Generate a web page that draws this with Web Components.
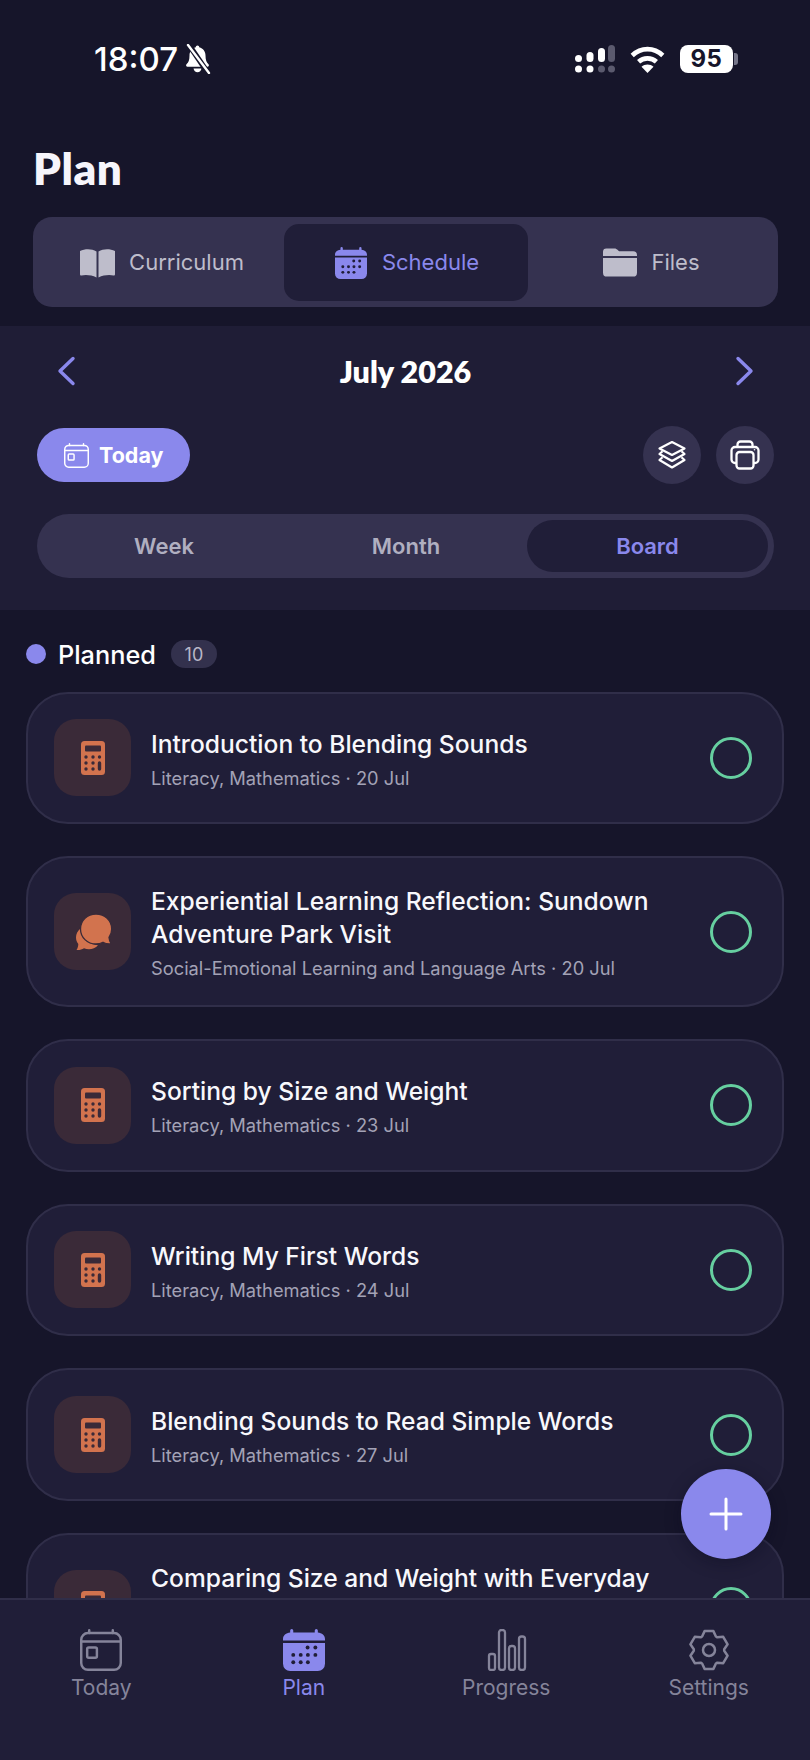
<!DOCTYPE html>
<html lang="en">
<head>
<meta charset="utf-8">
<title>Plan</title>
<style>
  html, body { margin: 0; background: #16152a; }
  body { font-family: Inter, "Liberation Sans", sans-serif; color: #fff; }
</style>
</head>
<body>
<plan-app>
  <status-bar slot="status"></status-bar>
  <plan-tabs slot="head"></plan-tabs>
  <calendar-panel slot="head"></calendar-panel>
  <column-head slot="body" count="10">Planned</column-head>
  <plan-card slot="body" icon="calc" title="Introduction to Blending Sounds">Literacy, Mathematics · 20 Jul</plan-card>
  <plan-card slot="body" icon="chat" title="Experiential Learning Reflection: Sundown Adventure Park Visit">Social-Emotional Learning and Language Arts · 20 Jul</plan-card>
  <plan-card slot="body" icon="calc" title="Sorting by Size and Weight">Literacy, Mathematics · 23 Jul</plan-card>
  <plan-card slot="body" icon="calc" title="Writing My First Words">Literacy, Mathematics · 24 Jul</plan-card>
  <plan-card slot="body" icon="calc" title="Blending Sounds to Read Simple Words">Literacy, Mathematics · 27 Jul</plan-card>
  <plan-card slot="body" icon="calc" cut title="Comparing Size and Weight with Everyday"></plan-card>
  <add-button slot="over"></add-button>
  <bottom-nav slot="nav"></bottom-nav>
</plan-app>

<script>
// icons shared by the components
const calendarFilled = (c, bg) => `
  <svg viewBox="0 0 41 41" width="100%" height="100%">
    <path fill="${c}" d="M7 1.500a1.500 1.500 0 0 1 3 0V3.500h21V1.500a1.500 1.500 0 0 1 3 0V3.500C38 3.800 41 6.300 41 10v1.200H0V10C0 6.300 3 3.800 7 3.500z"/>
    <path fill="${c}" d="M0 13.600h41V34a7 7 0 0 1-7 7H7a7 7 0 0 1-7-7z"/>
    <g fill="${bg}">
      <circle cx="24" cy="18" r="1.900"/><circle cx="31.600" cy="18" r="1.900"/>
      <circle cx="10" cy="25.300" r="1.900"/><circle cx="17.300" cy="25.300" r="1.900"/><circle cx="24.300" cy="25.300" r="1.900"/><circle cx="31.600" cy="25.300" r="1.900"/>
      <circle cx="10" cy="32.500" r="1.900"/><circle cx="17.300" cy="32.500" r="1.900"/><circle cx="24.300" cy="32.500" r="1.900"/>
    </g>
  </svg>`;

const calendarOutline = (c, sw) => `
  <svg viewBox="0 0 41 41" width="100%" height="100%" fill="none" stroke="${c}" stroke-width="${sw}" stroke-linejoin="round" stroke-linecap="round">
    <rect x="1.200" y="4" width="38.600" height="35.800" rx="6.500"/>
    <path d="M1.200 12.200h38.600M9 1.200V4M32 1.200V4"/>
    <rect x="7" y="18" width="9.500" height="10" rx="1.500"/>
  </svg>`;

function gearPoints() {
  const pts = [];
  for (let i = 0; i < 6; i++) {
    const a = (i * 60 - 90) * Math.PI / 180;
    [[-27, 15.2], [-13, 19.4], [13, 19.4], [27, 15.2]].forEach(([d, r]) => {
      const t = a + d * Math.PI / 180;
      pts.push((21 + r * Math.cos(t)).toFixed(1) + ',' + (21 + r * Math.sin(t)).toFixed(1));
    });
  }
  return pts.join(' ');
}

class PlanApp extends HTMLElement {
  connectedCallback() {
    this.attachShadow({ mode: 'open' });
    this.shadowRoot.innerHTML = `
      <style>
        :host { display: flex; flex-direction: column; width: 810px; height: 1760px; background: #16152a; overflow: hidden; position: relative; }
        .list { flex: 1; min-height: 0; overflow: hidden; padding: 0 26px; display: flex; flex-direction: column; gap: 32px; position: relative; }
        ::slotted(bottom-nav) { flex: none; }
      </style>
      <slot name="status"></slot>
      <slot name="head"></slot>
      <div class="list"><slot name="body"></slot></div>
      <slot name="over"></slot>
      <slot name="nav"></slot>
    `;
  }
}

class StatusBar extends HTMLElement {
  connectedCallback() {
    this.attachShadow({ mode: 'open' });
    this.shadowRoot.innerHTML = `
      <style>
        :host { display: flex; align-items: center; height: 118px; padding: 0 72px 0 94px; font-family: Inter, sans-serif; }
        .time { font-size: 33px; font-weight: 500; letter-spacing: 0; color: #fff; }
        .bell { margin-left: 6px; display: block; }
        .right { margin-left: auto; display: flex; align-items: center; gap: 15px; }
        .batt { display: flex; align-items: center; gap: 1px; }
        .cell { width: 53px; height: 28px; background: #fff; border-radius: 8px; color: #16152a; font-size: 24px; font-weight: 700; letter-spacing: 0.6px; text-align: center; line-height: 28px; }
        .tip { width: 4px; height: 12px; background: #77778a; border-radius: 0 3px 3px 0; }
      </style>
      <span class="time">18:07</span>
      <svg class="bell" width="28" height="30" viewBox="0 0 28 30">
        <path fill="#fff" d="M13.500 1.500c-1 0-1.700.8-1.700 1.800C7.800 4.300 5.500 7.600 5.500 11.500c0 4.600-1 7-3 8.800-.9.900-.3 2.400 1 2.400h20c1.300 0 1.900-1.500 1-2.400-2-1.800-3-4.200-3-8.800 0-3.900-2.300-7.200-6.300-8.200 0-1-.7-1.800-1.700-1.800z"/>
        <path fill="#fff" d="M9.500 24.500h8c-.3 2.200-2 3.700-4 3.700s-3.700-1.500-4-3.700z"/>
        <path d="M5 1l19 28" stroke="#16152a" stroke-width="5.500"/>
        <path d="M4 1l21 28" stroke="#fff" stroke-width="2.400" stroke-linecap="round"/>
      </svg>
      <div class="right">
        <svg width="40" height="29" viewBox="0 0 40 29">
          <g fill="#fff">
            <rect x="0" y="10" width="7" height="7" rx="3.500"/><rect x="11.500" y="7" width="7" height="10" rx="3.500"/><rect x="23" y="3" width="7" height="14" rx="3.500"/>
            <circle cx="3.500" cy="24" r="3.500"/><circle cx="15" cy="24" r="3.500"/>
          </g>
          <g fill="#5b5a6e">
            <rect x="33" y="0" width="7" height="17" rx="3.500"/>
            <circle cx="26.500" cy="24" r="3.500"/><circle cx="36.500" cy="24" r="3.500"/>
          </g>
        </svg>
        <svg width="35" height="27" viewBox="0 0 35 27" fill="none" stroke="#fff" stroke-width="4.600">
          <path d="M2.200 9.500C11 1 24 1 32.800 9.500"/>
          <path d="M8.600 15.800c5-4.600 12.800-4.600 17.800 0"/>
          <path stroke="none" fill="#fff" d="M17.500 27l-6-6.200c3.400-3 8.600-3 12 0z"/>
        </svg>
        <div class="batt"><div class="cell">95</div><div class="tip"></div></div>
      </div>
    `;
  }
}

class PlanTabs extends HTMLElement {
  connectedCallback() {
    this.attachShadow({ mode: 'open' });
    this.shadowRoot.innerHTML = `
      <style>
        :host { display: block; font-family: Inter, sans-serif; }
        h1 { margin: 0; padding: 25px 33px 0; font: 800 44px/50px Lato, sans-serif; letter-spacing: 0.5px; color: #f6f5fb; height: 99px; box-sizing: border-box; }
        .bar { margin: 0 32px 19px 33px; height: 90px; box-sizing: border-box; padding: 7px 7px 6px; background: #353250; border-radius: 19px; display: grid; grid-template-columns: 244px 244px 1fr; }
        .tab { display: flex; align-items: center; justify-content: center; gap: 14px; font-size: 22px; color: #bebdcb; border-radius: 15px; }
        .tab span:last-child { margin-bottom: 2px; }
        .tab.on { background: #201e38; color: #8a88ec; gap: 15px; padding-left: 2px; }
        .tab.last { padding-left: 4px; }
        .ic { display: block; }
      </style>
      <h1>Plan</h1>
      <div class="bar">
        <div class="tab">
          <svg class="ic" width="35" height="30" viewBox="0 0 35 30" fill="#bebdcb">
            <path d="M0 3C5 .8 11.500.5 16.500 3.500v26C11.500 26.800 5 26.600 1.500 27.500 .6 27.700 0 27.100 0 26.300z"/>
            <path d="M35 3C30 .8 23.500.5 18.500 3.500v26C23.500 26.800 30 26.600 33.500 27.500c.9.200 1.500-.4 1.500-1.200z"/>
          </svg>
          <span>Curriculum</span>
        </div>
        <div class="tab on">
          <span style="width:32px;height:32px;display:block">${calendarFilled('#8a88ec', '#201e38')}</span>
          <span>Schedule</span>
        </div>
        <div class="tab last">
          <svg class="ic" width="34" height="29" viewBox="0 0 35 29" fill="#bebdcb">
            <path d="M0 3.500A3.500 3.500 0 0 1 3.500 0h8.300c1.200 0 2 .4 2.800 1.200L16.500 3H31a4 4 0 0 1 4 4v.8H0z"/>
            <path d="M0 9.800h35V25a4 4 0 0 1-4 4H4a4 4 0 0 1-4-4z"/>
          </svg>
          <span>Files</span>
        </div>
      </div>
    `;
  }
}

class CalendarPanel extends HTMLElement {
  connectedCallback() {
    this.attachShadow({ mode: 'open' });
    this.shadowRoot.innerHTML = `
      <style>
        :host { display: block; height: 284px; box-sizing: border-box; padding: 17px 36px 0 37px; background: #1f1d36; font-family: Inter, sans-serif; }
        .month { display: flex; align-items: center; justify-content: space-between; height: 56px; padding: 0 20px; }
        .month b { font: 800 30.500px/40px Lato, sans-serif; color: #fff; }
        .tools { display: flex; align-items: center; margin-top: 27px; height: 58px; gap: 15px; }
        .today { display: flex; align-items: center; gap: 10px; width: 153px; height: 54px; box-sizing: border-box; padding-left: 27px; background: #8a88ec; border-radius: 27px; font-size: 21.500px; font-weight: 700; color: #fff; margin-right: auto; }
        .round { width: 58px; height: 58px; border-radius: 50%; background: #353250; display: flex; align-items: center; justify-content: center; }
        .views { margin-top: 30px; height: 64px; box-sizing: border-box; padding: 6px; border-radius: 32px; background: #353250; display: grid; grid-template-columns: 1fr 1fr 241px; font-size: 22px; font-weight: 600; color: #b0afc0; }
        .views span { display: flex; align-items: center; justify-content: center; border-radius: 26px; }
        .views .on { background: #201e38; color: #8a88ec; }
      </style>
      <div class="month">
        <svg width="19" height="30" viewBox="0 0 19 30" fill="none" stroke="#8a88ec" stroke-width="3.400" stroke-linecap="round" stroke-linejoin="round"><path d="M16 2.500 3 15l13 12.500"/></svg>
        <b>July 2026</b>
        <svg width="19" height="30" viewBox="0 0 19 30" fill="none" stroke="#8a88ec" stroke-width="3.400" stroke-linecap="round" stroke-linejoin="round"><path d="M3 2.500 16 15 3 27.500"/></svg>
      </div>
      <div class="tools">
        <div class="today">
          <span style="width:25px;height:25px;display:block">${calendarOutline('#fff', 2.4)}</span>
          <span>Today</span>
        </div>
        <div class="round">
          <svg width="30" height="30" viewBox="0 0 30 30" fill="none" stroke="#fff" stroke-width="2.200" stroke-linejoin="round">
            <path d="M15 2 27.500 8.500 15 15 2.500 8.500z"/>
            <path d="M5.500 11.200 2.500 14 15 21l12.500-7-3-2.800"/>
            <path d="M5.500 17.200 2.500 20 15 27.500 27.500 20l-3-2.800"/>
          </svg>
        </div>
        <div class="round">
          <svg width="30" height="30" viewBox="0 0 30 30" fill="none" stroke="#fff" stroke-width="2.300" stroke-linejoin="round">
            <path d="M7.500 7V4.500A3 3 0 0 1 10.500 1.500h9a3 3 0 0 1 3 3V7"/>
            <path d="M6.500 23H5a3.500 3.500 0 0 1-3.500-3.500V10.500A3.500 3.500 0 0 1 5 7h20a3.500 3.500 0 0 1 3.500 3.500v9A3.500 3.500 0 0 1 25 23h-1.500"/>
            <rect x="6.500" y="12" width="17" height="16.500" rx="3"/>
            <circle cx="24.500" cy="9.800" r="0.800" fill="#fff" stroke="none"/>
          </svg>
        </div>
      </div>
      <div class="views"><span>Week</span><span>Month</span><span class="on">Board</span></div>
    `;
  }
}

class ColumnHead extends HTMLElement {
  connectedCallback() {
    this.attachShadow({ mode: 'open' });
    this.shadowRoot.innerHTML = `
      <style>
        :host { display: flex; align-items: center; height: 28px; margin: 30px 0 -8.500px; font-family: Inter, sans-serif; }
        .dot { width: 20px; height: 20px; border-radius: 50%; background: #8a88ec; margin-right: 12px; }
        .name { font-size: 25.300px; font-weight: 500; color: #fff; }
        .count { margin-left: 15px; width: 46px; height: 28px; border-radius: 14px; background: #33314d; color: #b8b7c8; font-size: 18px; display: flex; align-items: center; justify-content: center; }
      </style>
      <span class="dot"></span>
      <span class="name"><slot></slot></span>
      <span class="count">${this.getAttribute('count')}</span>
    `;
  }
}

const cardIcons = {
  calc: `
    <svg width="24" height="34" viewBox="0 0 24 34">
      <rect width="24" height="34" rx="3.500" fill="#d2734e"/>
      <rect x="4" y="4.500" width="16" height="6" rx="1" fill="#3a2a38"/>
      <g fill="#3a2a38">
        <circle cx="5" cy="16" r="1.700"/><circle cx="12" cy="16" r="1.700"/><circle cx="18.500" cy="16" r="1.700"/>
        <circle cx="5" cy="22" r="1.700"/><circle cx="12" cy="22" r="1.700"/>
        <circle cx="5" cy="28" r="1.700"/><circle cx="12" cy="28" r="1.700"/>
        <rect x="16.800" y="20.300" width="3.400" height="9.500" rx="1.700"/>
      </g>
    </svg>`,
  chat: `
    <svg width="36" height="38" viewBox="0 0 36 38" style="margin-left:2px">
      <path fill="#d2734e" d="M5 15C1.500 18 0 21 0 24.500c0 2.500.8 4.800 2.300 6.500-.1 2.300-.7 4.500-1.800 6 2.800.3 5.400-.5 7.500-1.800 4.800 2 10.500 1 14-3C14 32 5 26 5 15z"/>
      <path fill="#d2734e" stroke="#3a2a38" stroke-width="1.300" d="M20 1C11.200 1 4.500 7.700 4.500 16S11.200 31 20 31c2.800 0 5-.6 7-1.700 2.200 1.300 5.300 1.900 8.200 1.500-1.400-1.800-2-3.900-2.200-6.300 1.800-2.500 2.700-5.300 2.700-8.500C35.700 7.700 28.800 1 20 1z"/>
    </svg>`
};

class PlanCard extends HTMLElement {
  connectedCallback() {
    const icon = this.getAttribute('icon');
    const title = this.getAttribute('title');
    this.removeAttribute('title');
    const cut = this.hasAttribute('cut');
    this.attachShadow({ mode: 'open' });
    this.shadowRoot.innerHTML = `
      <style>
        :host { display: flex; flex: none; align-items: center; min-height: 132.600px; box-sizing: border-box; padding: 0 30px 0 26px; background: #201e38; border: 2px solid #302e49; border-radius: 42px; font-family: Inter, sans-serif; }
        :host([cut]) { min-height: 151px; }
        .tile { flex: none; width: 77px; height: 77px; border-radius: 22px; background: #3a2a38; display: flex; align-items: center; justify-content: center; }
        .text { flex: 1; margin: 27px 0 25px 20px; min-width: 0; }
        :host([cut]) .text { align-self: flex-start; margin-top: 27px; }
        .title { font-size: 24.600px; line-height: 33px; font-weight: 500; color: #f8f8fc; }
        .sub { font-size: 18.300px; line-height: 24px; margin-top: 5px; color: #a3a2b6; }
        .check { flex: none; width: 42px; height: 42px; box-sizing: border-box; border: 3.500px solid #66cfa0; border-radius: 50%; margin-left: 20px; }
      </style>
      <div class="tile">${cardIcons[icon]}</div>
      <div class="text">
        <div class="title">${title}</div>
        ${cut ? '' : '<div class="sub"><slot></slot></div>'}
      </div>
      <div class="check"></div>
    `;
  }
}

class AddButton extends HTMLElement {
  connectedCallback() {
    this.attachShadow({ mode: 'open' });
    this.shadowRoot.innerHTML = `
      <style>
        :host { position: absolute; left: 681px; top: 1469px; width: 90px; height: 90px; border-radius: 50%; background: #8a88ec; display: flex; align-items: center; justify-content: center; box-shadow: 0 4px 16px rgba(10, 8, 30, .35); }
      </style>
      <svg width="34" height="34" viewBox="0 0 34 34" stroke="#fff" stroke-width="3" stroke-linecap="round"><path d="M17 2v30M2 17h30"/></svg>
    `;
  }
}

class BottomNav extends HTMLElement {
  connectedCallback() {
    const grey = '#85849a';
    this.attachShadow({ mode: 'open' });
    this.shadowRoot.innerHTML = `
      <style>
        :host { display: grid; grid-template-columns: repeat(4, 1fr); height: 162px; box-sizing: border-box; padding-top: 29px; background: #201e38; border-top: 2px solid #302e49; font-family: Inter, sans-serif; position: relative; }
        .item { display: flex; flex-direction: column; align-items: center; font-size: 21px; line-height: 28px; color: ${grey}; }
        .item.on { color: #8a88ec; }
        .ic { width: 42px; height: 42px; display: block; margin-bottom: 3px; }
      </style>
      <div class="item"><span class="ic">${calendarOutline(grey, 2.4)}</span>Today</div>
      <div class="item on"><span class="ic">${calendarFilled('#8a88ec', '#201e38')}</span>Plan</div>
      <div class="item">
        <svg class="ic" viewBox="0 0 42 42" fill="none" stroke="${grey}" stroke-width="2.300">
          <rect x="4" y="25" width="6" height="16" rx="2"/>
          <rect x="14" y="1" width="6" height="40" rx="2.500"/>
          <rect x="24" y="17" width="6" height="24" rx="2.500"/>
          <rect x="34" y="7.500" width="6" height="33.500" rx="2.500"/>
        </svg>
        Progress
      </div>
      <div class="item">
        <svg class="ic" viewBox="0 0 42 42" fill="none" stroke="${grey}" stroke-width="2.500" stroke-linejoin="round">
          <polygon points="${gearPoints()}"/>
          <circle cx="21" cy="21" r="6"/>
        </svg>
        Settings
      </div>
    `;
  }
}

customElements.define('plan-app', PlanApp);
customElements.define('status-bar', StatusBar);
customElements.define('plan-tabs', PlanTabs);
customElements.define('calendar-panel', CalendarPanel);
customElements.define('column-head', ColumnHead);
customElements.define('plan-card', PlanCard);
customElements.define('add-button', AddButton);
customElements.define('bottom-nav', BottomNav);
</script>
</body>
</html>
